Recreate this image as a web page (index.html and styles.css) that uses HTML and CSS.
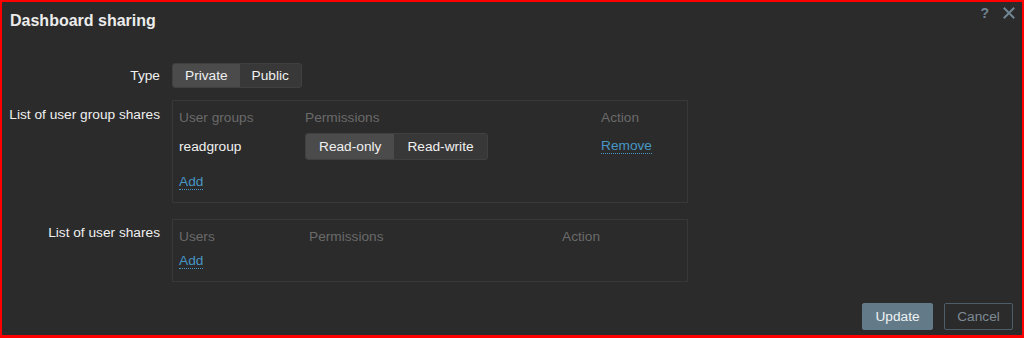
FILE: index.html
```html
<!DOCTYPE html>
<html>
<head>
<meta charset="utf-8">
<link rel="stylesheet" href="styles.css">
</head>
<body>
<div class="dialog">
  <div class="header">
    <h1 class="title">Dashboard sharing</h1>
    <div class="header-tools">
      <span class="tool help">?</span>
      <span class="tool close">
        <svg width="12" height="12" viewBox="0 0 12 12"><path d="M1.5 1.5 L10.5 10.5 M10.5 1.5 L1.5 10.5" stroke="#6f8593" stroke-width="2" stroke-linecap="square"/></svg>
      </span>
    </div>
  </div>
  <div class="form">
    <div class="row row-type">
      <div class="label">Type</div>
      <div class="field">
        <div class="seg">
          <span class="seg-item active">Private</span>
          <span class="seg-item">Public</span>
        </div>
      </div>
    </div>
    <div class="row row-groups">
      <div class="label label-top">List of user group shares</div>
      <div class="field">
        <div class="share-box box-groups">
          <div class="th">User groups</div>
          <div class="th">Permissions</div>
          <div class="th">Action</div>
          <div class="td name">readgroup</div>
          <div class="td">
            <div class="seg seg-perm">
              <span class="seg-item active">Read-only</span>
              <span class="seg-item">Read-write</span>
            </div>
          </div>
          <div class="td"><a class="link">Remove</a></div>
          <div class="td add-cell"><a class="link">Add</a></div>
        </div>
      </div>
    </div>
    <div class="row row-users">
      <div class="label label-top label-users">List of user shares</div>
      <div class="field">
        <div class="share-box box-users">
          <div class="th">Users</div>
          <div class="th">Permissions</div>
          <div class="th">Action</div>
          <div class="td add-cell"><a class="link">Add</a></div>
        </div>
      </div>
    </div>
  </div>
  <div class="footer">
    <button class="btn btn-primary">Update</button>
    <button class="btn btn-alt">Cancel</button>
  </div>
</div>
</body>
</html>
```
FILE: styles.css
```css
* { box-sizing: border-box; }
html, body { margin: 0; padding: 0; }
body {
  background: #2b2b2b;
  font-family: "Liberation Sans", Arial, sans-serif;
  font-size: 13.7px;
  color: #f0f0f0;
}
.dialog {
  width: 1024px;
  height: 338px;
  border: 2px solid #ff0000;
  border-bottom-width: 3px;
  background: #2b2b2b;
  display: flex;
  flex-direction: column;
}
.header {
  display: flex;
  justify-content: space-between;
  align-items: flex-start;
  padding: 9px 7px 0 8px;
  height: 61px;
}
.title {
  margin: 0;
  font-size: 16px;
  font-weight: bold;
  color: #ececec;
  line-height: 20px;
}
.header-tools {
  display: flex;
  align-items: center;
  gap: 14px;
  margin-top: -6px;
}
.tool { color: #6f8593; font-weight: bold; font-size: 14px; line-height: 16px; display: flex; }
.form { display: flex; flex-direction: column; }
.row {
  display: grid;
  grid-template-columns: 158px 1fr;
  column-gap: 12px;
}
.label {
  text-align: right;
  color: #f0f0f0;
  align-self: center;
}
.label-top { align-self: start; padding-top: 7px; }
.label-users { padding-top: 6px; }
.row-type { height: 25px; }
.row-groups { margin-top: 12px; }
.row-users { margin-top: 16px; }
.seg {
  display: inline-flex;
  border: 1px solid #404040;
  border-radius: 3px;
  background: #383838;
  overflow: hidden;
  height: 25px;
}
.seg-item {
  padding: 0 12px;
  line-height: 23px;
  color: #f0f0f0;
}
.seg-item.active { background: #4b4b4b; }
.seg-perm { height: 27px; }
.seg-perm .seg-item { line-height: 25px; padding: 0 13px; }
.share-box {
  width: 516px;
  border: 1px solid #383838;
  display: grid;
  align-content: start;
  padding: 0 6px;
}
.box-groups {
  grid-template-columns: 126px 296px 1fr;
  height: 103px;
}
.box-users {
  grid-template-columns: 130px 253px 1fr;
  height: 63px;
}
.th {
  color: #6a6a6a;
  padding-top: 9px;
  height: 29px;
  line-height: 16px;
}
.td { display: flex; align-items: center; height: 32px; }
.add-cell { grid-column: 1 / -1; align-items: flex-start; height: 32px; padding-top: 12px; }
.box-users .add-cell { padding-top: 4px; height: 24px; }
.link {
  color: #4796c4;
  border-bottom: 1px dotted #4796c4;
  line-height: 15px;
  cursor: pointer;
}
.footer {
  margin-top: auto;
  display: flex;
  justify-content: flex-end;
  gap: 11px;
  padding: 0 9px 5px 0;
}
.btn {
  font-family: "Liberation Sans", Arial, sans-serif;
  font-size: 13.7px;
  height: 27px;
  border-radius: 2px;
  padding: 0 10px;
  cursor: pointer;
}
.btn-primary {
  background: #637a88;
  border: 1px solid #637a88;
  color: #eef2f4;
  width: 71px;
}
.btn-alt {
  background: transparent;
  border: 1px solid #4e5d67;
  color: #7c8a94;
  width: 69px;
}
```
